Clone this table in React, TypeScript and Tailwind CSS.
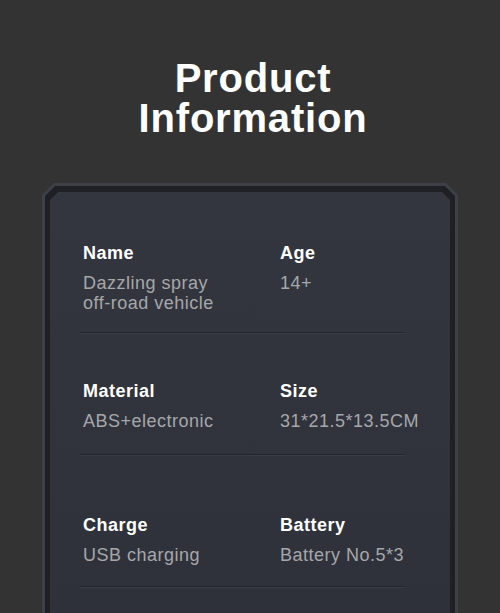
import React from 'react'

type Spec = {
  label: string
  value: string[]
}

const rows: { left: Spec; right: Spec; top: string; bottom: string }[] = [
  {
    left: { label: 'Name', value: ['Dazzling spray', 'off-road vehicle'] },
    right: { label: 'Age', value: ['14+'] },
    top: 'pt-[51px]',
    bottom: 'pb-[19px]',
  },
  {
    left: { label: 'Material', value: ['ABS+electronic'] },
    right: { label: 'Size', value: ['31*21.5*13.5CM'] },
    top: 'pt-[47px]',
    bottom: 'pb-[23px]',
  },
  {
    left: { label: 'Charge', value: ['USB charging'] },
    right: { label: 'Battery', value: ['Battery No.5*3'] },
    top: 'pt-[59px]',
    bottom: 'pb-[21px]',
  },
]

function SpecCell({ spec }: { spec: Spec }) {
  return (
    <div>
      <div className="text-[18px] leading-[21px] font-bold text-white tracking-[0.5px] whitespace-nowrap">
        {spec.label}
      </div>
      <div className="mt-[9px] text-[18px] leading-[20px] text-[#a6a7aa] tracking-[0.5px] whitespace-nowrap">
        {spec.value.map((line) => (
          <div key={line}>{line}</div>
        ))}
      </div>
    </div>
  )
}

export default function App() {
  return (
    <div className="h-[613px] w-[500px] overflow-hidden bg-[#333333] font-['Liberation_Sans',Arial,sans-serif]">
      {/* タイトル */}
      <h1 className="pt-[58px] pl-[6px] text-center text-[40px] leading-[40px] font-bold tracking-[0.8px] text-white">
        Product
        <br />
        Information
      </h1>

      {/* カード枠 */}
      <div className="mt-[45px] ml-[42px] w-[416px] h-[460px] bg-[#3d4047] pt-[3px] px-[3px] [clip-path:polygon(12px_0,calc(100%-12px)_0,100%_12px,100%_100%,0_100%,0_12px)]">
        <div className="h-full bg-[#1e2025] pt-[6px] px-[5px] [clip-path:polygon(10px_0,calc(100%-10px)_0,100%_10px,100%_100%,0_100%,0_10px)]">
          <div className="h-full bg-gradient-to-b from-[#33363f] to-[#2e3139] [clip-path:polygon(8px_0,calc(100%-8px)_0,100%_8px,100%_100%,0_100%,0_8px)]">
            <div className="ml-[30px] w-[325px]">
              {rows.map((row) => (
                <div key={row.left.label}>
                  <div className={`grid grid-cols-[197px_1fr] pl-[3px] ${row.top} ${row.bottom}`}>
                    <SpecCell spec={row.left} />
                    <SpecCell spec={row.right} />
                  </div>
                  <div className="h-px bg-[#23252b]" />
                  <div className="h-px bg-[#3a3d45]" />
                </div>
              ))}
            </div>
          </div>
        </div>
      </div>
    </div>
  )
}
